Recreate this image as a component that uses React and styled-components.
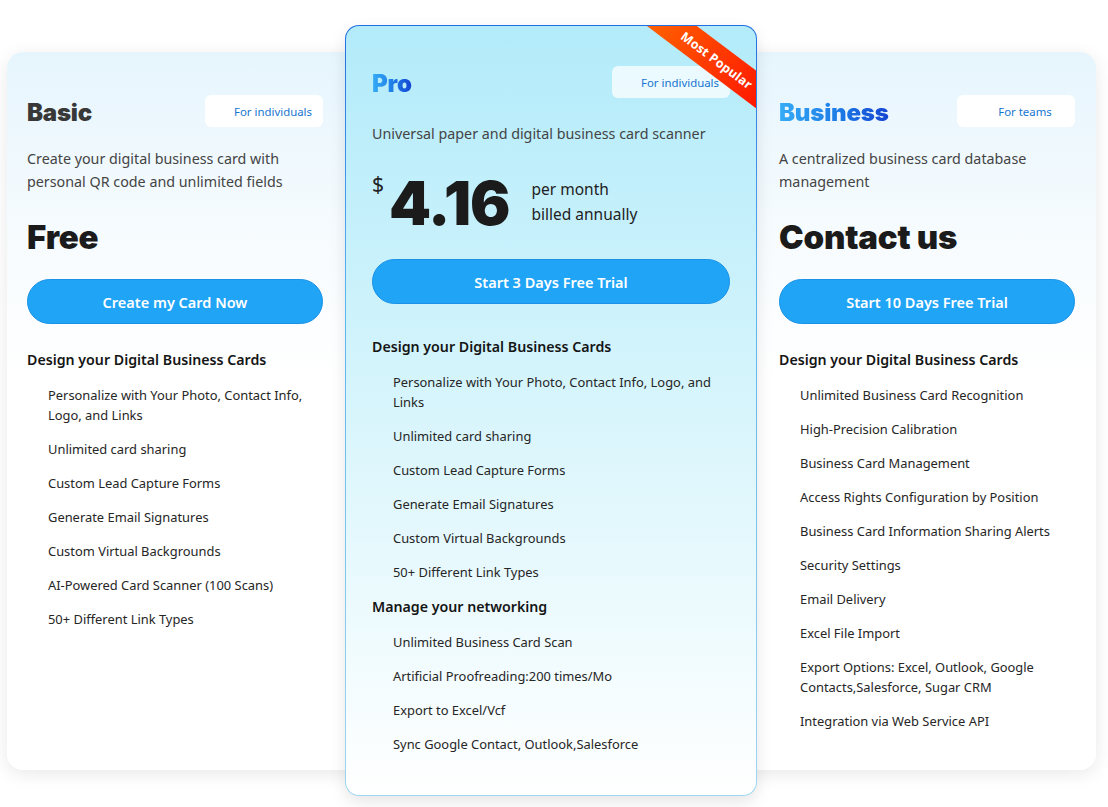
import React from "react";
import styled, { createGlobalStyle } from "styled-components";

const Global = createGlobalStyle`
  * { box-sizing: border-box; }
  html, body { margin: 0; padding: 0; background: #fff; }
  body { font-family: "Noto Sans", "Open Sans", sans-serif; color: #222; }
`;

const Page = styled.div`
  padding: 52px 12px 37px 7px;
`;

const Board = styled.div`
  display: grid;
  grid-template-columns: 338px 412px 1fr;
  align-items: stretch;
  border-radius: 16px;
  background: linear-gradient(180deg, #e6f5fd 0%, #f6fbfe 25%, #ffffff 45%);
  box-shadow: 0 4px 18px rgba(0, 0, 0, 0.09);
`;

const Column = styled.div`
  display: flex;
  flex-direction: column;
  padding: 43px ${(p) => p.$right}px 39px ${(p) => p.$left}px;
`;

const ProCard = styled.div`
  position: relative;
  overflow: hidden;
  margin: -27px 0 -26px;
  display: flex;
  flex-direction: column;
  padding: 40px 26px 40px 26px;
  border: 1px solid transparent;
  border-radius: 14px;
  background:
    linear-gradient(180deg, #b3ebfa 0%, #c8f1fb 30%, #dcf6fc 55%, #ffffff 100%) padding-box,
    linear-gradient(180deg, #1f6fe0 0%, #5ab4ee 35%, #9fd7f1 100%) border-box;
  box-shadow: 0 6px 16px rgba(0, 0, 0, 0.1);
`;

const Ribbon = styled.div`
  position: absolute;
  left: 266px;
  top: 19px;
  width: 210px;
  height: 30px;
  transform: rotate(37deg);
  background: linear-gradient(90deg, #ff7000 0%, #ff3800 50%, #ff0000 100%);
  color: #fff;
  font-family: "Open Sans", "Noto Sans", sans-serif;
  font-weight: 700;
  font-size: 12.5px;
  display: flex;
  align-items: center;
  justify-content: center;
  letter-spacing: 0.2px;
`;

const TitleRow = styled.div`
  display: flex;
  align-items: center;
  justify-content: space-between;
  height: 32px;
`;

const Title = styled.h2`
  margin: 3px 0 0;
  font-family: "Inter", "Noto Sans", sans-serif;
  font-weight: 900;
  font-size: 24px;
  letter-spacing: -0.2px;
  color: #383838;
  ${(p) =>
    p.$gradient &&
    `
    background: linear-gradient(90deg, #35acf6 0%, #1d7ae6 55%, #1444d2 100%);
    -webkit-background-clip: text;
    background-clip: text;
    color: transparent;
  `}
`;

const Badge = styled.div`
  width: 118px;
  height: 32px;
  border-radius: 6px;
  background: ${(p) => (p.$soft ? "rgba(255,255,255,0.72)" : "#ffffff")};
  color: #1775d0;
  font-size: 11.4px;
  display: flex;
  align-items: center;
  justify-content: center;
  padding-left: 18px;
`;

const Desc = styled.p`
  margin: ${(p) => p.$mt}px 0 0;
  font-size: 14.3px;
  line-height: 23px;
  color: #444;
`;

const BigPrice = styled.div`
  margin-top: 22px;
  font-family: "Inter", "Noto Sans", sans-serif;
  font-weight: 900;
  font-size: 33px;
  line-height: 44px;
  color: #1b1b1b;
  letter-spacing: -0.2px;
`;

const PriceRow = styled.div`
  display: flex;
  align-items: center;
  margin-top: 20px;
  height: 76px;
`;

const Dollar = styled.span`
  align-self: flex-start;
  margin-top: 7px;
  font-size: 21px;
  line-height: 24px;
  color: #222;
`;

const Amount = styled.span`
  margin-left: 5px;
  font-family: "Inter", "Noto Sans", sans-serif;
  font-weight: 900;
  font-size: 60px;
  line-height: 76px;
  letter-spacing: -1px;
  color: #1b1b1b;
`;

const Period = styled.div`
  margin-left: 22px;
  font-size: 15.5px;
  line-height: 25px;
  color: #222;
  margin-top: -2px;
`;

const CTA = styled.button`
  margin-top: ${(p) => p.$mt}px;
  height: 45px;
  width: 100%;
  border-radius: 23px;
  border: 1px solid #1b92e6;
  background: #1fa4f6;
  color: #fff;
  font-family: "Noto Sans", "Open Sans", sans-serif;
  font-weight: 600;
  font-size: 14.5px;
  cursor: pointer;
`;

const Section = styled.h3`
  margin: ${(p) => p.$mt}px 0 0;
  font-size: 14.2px;
  line-height: 22px;
  font-weight: 600;
  color: #151515;
`;

const List = styled.ul`
  list-style: none;
  margin: 0;
  padding: 0 0 0 21px;
`;

const Item = styled.li`
  margin-top: 14px;
  font-size: 12.9px;
  line-height: 20px;
  color: #262626;
`;

const Features = ({ items }) => (
  <List>
    {items.map((t) => (
      <Item key={t}>{t}</Item>
    ))}
  </List>
);

export default function App() {
  return (
    <>
      <Global />
      <Page>
        <Board>
          <Column $left={20} $right={22}>
            <TitleRow>
              <Title>Basic</Title>
              <Badge>For individuals</Badge>
            </TitleRow>
            <Desc $mt={20}>
              Create your digital business card with personal QR code and unlimited fields
            </Desc>
            <BigPrice>Free</BigPrice>
            <CTA $mt={20}>Create my Card Now</CTA>
            <Section $mt={25}>Design your Digital Business Cards</Section>
            <Features
              items={[
                "Personalize with Your Photo, Contact Info, Logo, and Links",
                "Unlimited card sharing",
                "Custom Lead Capture Forms",
                "Generate Email Signatures",
                "Custom Virtual Backgrounds",
                "AI-Powered Card Scanner (100 Scans)",
                "50+ Different Link Types",
              ]}
            />
          </Column>

          <ProCard>
            <TitleRow>
              <Title $gradient>Pro</Title>
              <Badge $soft>For individuals</Badge>
            </TitleRow>
            <Desc $mt={24}>Universal paper and digital business card scanner</Desc>
            <PriceRow>
              <Dollar>$</Dollar>
              <Amount>4.16</Amount>
              <Period>
                per month
                <br />
                billed annually
              </Period>
            </PriceRow>
            <CTA $mt={18}>Start 3 Days Free Trial</CTA>
            <Section $mt={32}>Design your Digital Business Cards</Section>
            <Features
              items={[
                "Personalize with Your Photo, Contact Info, Logo, and Links",
                "Unlimited card sharing",
                "Custom Lead Capture Forms",
                "Generate Email Signatures",
                "Custom Virtual Backgrounds",
                "50+ Different Link Types",
              ]}
            />
            <Section $mt={14}>Manage your networking</Section>
            <Features
              items={[
                "Unlimited Business Card Scan",
                "Artificial Proofreading:200 times/Mo",
                "Export to Excel/Vcf",
                "Sync Google Contact, Outlook,Salesforce",
              ]}
            />
            <Ribbon>Most Popular</Ribbon>
          </ProCard>

          <Column $left={22} $right={21}>
            <TitleRow>
              <Title $gradient>Business</Title>
              <Badge>For teams</Badge>
            </TitleRow>
            <Desc $mt={20}>A centralized business card database management</Desc>
            <BigPrice>Contact us</BigPrice>
            <CTA $mt={20}>Start 10 Days Free Trial</CTA>
            <Section $mt={25}>Design your Digital Business Cards</Section>
            <Features
              items={[
                "Unlimited Business Card Recognition",
                "High-Precision Calibration",
                "Business Card Management",
                "Access Rights Configuration by Position",
                "Business Card Information Sharing Alerts",
                "Security Settings",
                "Email Delivery",
                "Excel File Import",
                "Export Options: Excel, Outlook, Google Contacts,Salesforce, Sugar CRM",
                "Integration via Web Service API",
              ]}
            />
          </Column>
        </Board>
      </Page>
    </>
  );
}
